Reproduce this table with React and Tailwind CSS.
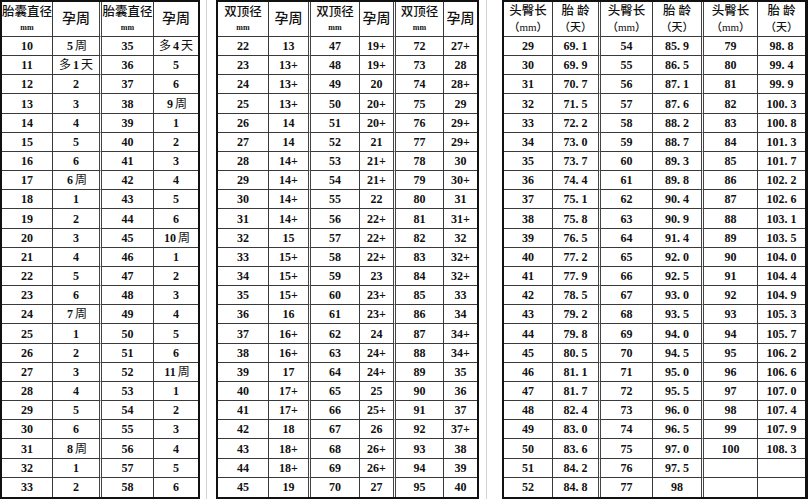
import React from "react";

const sac = {
  a: [10, 11, 12, 13, 14, 15, 16, 17, 18, 19, 20, 21, 22, 23, 24, 25, 26, 27, 28, 29, 30, 31, 32, 33],
  b: ["5 周", "多 1 天", "2", "3", "4", "5", "6", "6 周", "1", "2", "3", "4", "5", "6", "7 周", "1", "2", "3", "4", "5", "6", "8 周", "1", "2"],
  c: [35, 36, 37, 38, 39, 40, 41, 42, 43, 44, 45, 46, 47, 48, 49, 50, 51, 52, 53, 54, 55, 56, 57, 58],
  d: ["多 4 天", "5", "6", "9 周", "1", "2", "3", "4", "5", "6", "10 周", "1", "2", "3", "4", "5", "6", "11 周", "1", "2", "3", "4", "5", "6"],
};

const bpd = {
  a: ["13", "13+", "13+", "13+", "14", "14", "14+", "14+", "14+", "14+", "15", "15+", "15+", "15+", "16", "16+", "16+", "17", "17+", "17+", "18", "18+", "18+", "19"],
  b: ["19+", "19+", "20", "20+", "20+", "21", "21+", "21+", "22", "22+", "22+", "22+", "23", "23+", "23+", "24", "24+", "24+", "25", "25+", "26", "26+", "26+", "27"],
  c: ["27+", "28", "28+", "29", "29+", "29+", "30", "30+", "31", "31+", "32", "32+", "32+", "33", "34", "34+", "34+", "35", "36", "37", "37+", "38", "39", "40"],
};

const crl = {
  a: ["69.1", "69.9", "70.7", "71.5", "72.2", "73.0", "73.7", "74.4", "75.1", "75.8", "76.5", "77.2", "77.9", "78.5", "79.2", "79.8", "80.5", "81.1", "81.7", "82.4", "83.0", "83.6", "84.2", "84.8"],
  b: ["85.9", "86.5", "87.1", "87.6", "88.2", "88.7", "89.3", "89.8", "90.4", "90.9", "91.4", "92.0", "92.5", "93.0", "93.5", "94.0", "94.5", "95.0", "95.5", "96.0", "96.5", "97.0", "97.5", "98"],
  c: ["98.8", "99.4", "99.9", "100.3", "100.8", "101.3", "101.7", "102.2", "102.6", "103.1", "103.5", "104.0", "104.4", "104.9", "105.3", "105.7", "106.2", "106.6", "107.0", "107.4", "107.9", "108.3", "", ""],
};

const range = (from, len = 24) => Array.from({ length: len }, (_, i) => from + i);

// digits heavy, chinese regular; decimals look spaced out in the original (wide period)
const Num = ({ v }) => {
  const s = String(v);
  if (/[\u4e00-\u9fff]/.test(s)) {
    return s.split(" ").map((part, i) =>
      /[\u4e00-\u9fff]/.test(part) ? (
        <span key={i} className="font-normal">{part}</span>
      ) : (
        <span key={i} className="font-bold mx-[2px]">{part}</span>
      )
    );
  }
  if (!s.includes(".")) return <span className="font-bold">{s}</span>;
  const [i, d] = s.split(".");
  return (
    <span className="font-bold">
      {i}
      <span className="mr-[3px]">.</span>
      {d}
    </span>
  );
};

const cellBase = "flex items-center justify-center border-[#3a3a3a] text-[#111]";

const Cell = ({ last, lastRow, thick, children }) => {
  let cls = cellBase;
  if (!last) cls += thick ? " border-r-[3px] border-r-[#444] [border-right-style:double]" : " border-r";
  if (!lastRow) cls += " border-b";
  return <div className={cls}>{children}</div>;
};

const Head = ({ top, sub, big }) => (
  <div className="flex flex-col items-center justify-center h-full leading-none font-medium">
    <span className={big ? "text-[14px]" : "text-[12.5px]"}>{top}</span>
    {sub && <span className={sub.length > 2 ? "text-[11px] mt-[5px]" : "text-[8px] mt-[6px] font-bold"}>{sub}</span>}
  </div>
);

const Table = ({ gridCls, borderCls, heads, cols, thick }) => {
  const n = heads.length;
  return (
    <div className={`grid h-[499px] shrink-0 border-[#111] ${gridCls} ${borderCls}`}>
      {heads.map((h, ci) => (
        <Cell key={"h" + ci} last={ci === n - 1} thick={thick.includes(ci)}>
          <Head {...h} />
        </Cell>
      ))}
      {range(0).map((r) =>
        cols.map((col, ci) => (
          <Cell key={r + "-" + ci} last={ci === n - 1} lastRow={r === 23} thick={thick.includes(ci)}>
            <span className="whitespace-nowrap">
              <Num v={col[r] ?? ""} />
            </span>
          </Cell>
        ))
      )}
    </div>
  );
};

const Gap = ({ w, off }) => (
  <div className={`shrink-0 h-[499px] ${w}`}>
    <div className={`h-full border-l border-[#d4d4d4] ${off}`} />
  </div>
);

export default function App() {
  return (
    <div
      className="flex w-[809px] h-[500px] bg-white overflow-hidden text-[12px]"
      style={{ fontFamily: '"Liberation Serif", "Noto Sans CJK SC", serif' }}
    >
      <Table
        gridCls="w-[200px] grid-cols-[51px_49px_52px_44px] grid-rows-[35px_repeat(24,minmax(0,1fr))]"
        borderCls="border-2"
        thick={[1]}
        heads={[
          { top: "胎囊直径", sub: "mm" },
          { top: "孕周", big: true },
          { top: "胎囊直径", sub: "mm" },
          { top: "孕周", big: true },
        ]}
        cols={[sac.a, sac.b, sac.c, sac.d]}
      />
      <Gap w="w-[16px]" off="ml-[6px]" />
      <Table
        gridCls="w-[263px] grid-cols-[51px_42px_49px_36px_48px_33px] grid-rows-[35px_repeat(24,minmax(0,1fr))]"
        borderCls="border-2"
        thick={[1, 3]}
        heads={[
          { top: "双顶径", sub: "mm" },
          { top: "孕周", big: true },
          { top: "双顶径", sub: "mm" },
          { top: "孕周", big: true },
          { top: "双顶径", sub: "mm" },
          { top: "孕周", big: true },
        ]}
        cols={[range(22), bpd.a, range(47), bpd.b, range(72), bpd.c]}
      />
      <Gap w="w-[23px]" off="ml-[7px]" />
      <Table
        gridCls="w-[306px] grid-cols-[49px_48px_52px_51px_54px_47px] grid-rows-[35px_repeat(24,minmax(0,1fr))]"
        borderCls="border-2 border-r-[3px]"
        thick={[1, 3]}
        heads={[
          { top: "头臀长", sub: "（mm）" },
          { top: "胎 龄", sub: "（天）" },
          { top: "头臀长", sub: "（mm）" },
          { top: "胎 龄", sub: "（天）" },
          { top: "头臀长", sub: "（mm）" },
          { top: "胎 龄", sub: "（天）" },
        ]}
        cols={[range(29), crl.a, range(54), crl.b, range(79, 22), crl.c]}
      />
    </div>
  );
}
